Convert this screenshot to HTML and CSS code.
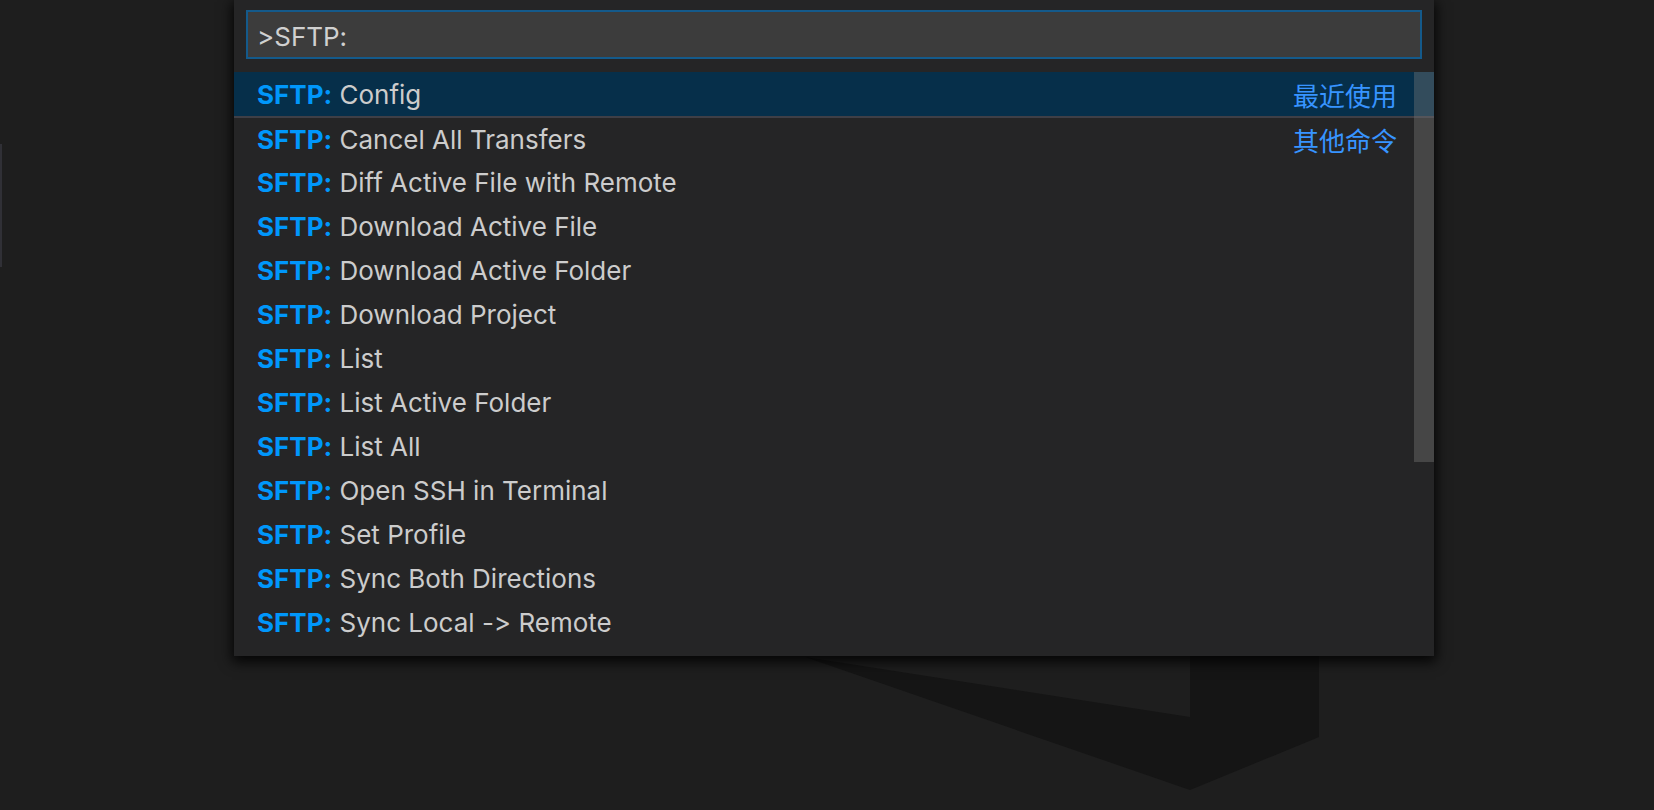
FILE: index.html
```html
<!DOCTYPE html>
<html lang="en">
<head>
<meta charset="utf-8">
<title>Command Palette</title>
<link rel="stylesheet" href="styles.css">
</head>
<body>
<div class="workbench">
  <div class="sash"></div>
  <div class="editor">
    <svg class="watermark" width="1652" height="810" viewBox="0 0 1652 810">
      <polygon points="803,657 1188,717 1188,640 1317,640 1317,737 1188,790" fill="#151515"/>
    </svg>
  </div>
</div>
<div class="quick-input">
  <div class="input-box">&gt;SFTP:</div>
  <div class="list">
    <div class="row selected"><span class="label"><b>SFTP:</b> Config</span><span class="desc">最近使用</span></div>
    <div class="row separator"><span class="label"><b>SFTP:</b> Cancel All Transfers</span><span class="desc">其他命令</span></div>
    <div class="row"><span class="label"><b>SFTP:</b> Diff Active File with Remote</span></div>
    <div class="row"><span class="label"><b>SFTP:</b> Download Active File</span></div>
    <div class="row"><span class="label"><b>SFTP:</b> Download Active Folder</span></div>
    <div class="row"><span class="label"><b>SFTP:</b> Download Project</span></div>
    <div class="row"><span class="label"><b>SFTP:</b> List</span></div>
    <div class="row"><span class="label"><b>SFTP:</b> List Active Folder</span></div>
    <div class="row"><span class="label"><b>SFTP:</b> List All</span></div>
    <div class="row"><span class="label"><b>SFTP:</b> Open SSH in Terminal</span></div>
    <div class="row"><span class="label"><b>SFTP:</b> Set Profile</span></div>
    <div class="row"><span class="label"><b>SFTP:</b> Sync Both Directions</span></div>
    <div class="row"><span class="label"><b>SFTP:</b> Sync Local -&gt; Remote</span></div>
    <div class="thumb"></div>
  </div>
</div>
</body>
</html>
```
FILE: styles.css
```css
* { box-sizing: border-box; }
html, body {
  margin: 0;
  padding: 0;
  width: 1654px;
  height: 810px;
  overflow: hidden;
  background: #1e1e1e;
  font-family: Inter, "Noto Sans CJK SC", sans-serif;
  font-variant-ligatures: none;
  font-feature-settings: "calt" 0, "liga" 0;
}
.workbench {
  display: flex;
  height: 810px;
}
.sash {
  width: 2px;
  height: 123px;
  margin-top: 144px;
  background: #303036;
}
.editor {
  flex: 1;
  height: 810px;
}
.watermark { display: block; }
.quick-input {
  position: absolute;
  left: 234px;
  top: 0;
  width: 1200px;
  height: 656px;
  background: #252526;
  box-shadow: 0 4px 12px 2px rgba(0,0,0,0.85);
  padding: 10px 12px 0;
  overflow: hidden;
}
.input-box {
  height: 49px;
  border: 2px solid #145a8b;
  background: #3c3c3c;
  color: #d0d0d0;
  font-size: 26px;
  line-height: 45px;
  padding: 2px 0 0 9px;
}
.list {
  position: relative;
  margin: 13px -12px 0;
}
.row {
  height: 44px;
  display: flex;
  align-items: center;
  justify-content: space-between;
  padding: 0 37px 0 23px;
  font-size: 26px;
  color: #cccccc;
  white-space: nowrap;
}
.row b {
  color: #0097fb;
  font-weight: 700;
}
.row.selected { background: #062f4a; }
.row.separator { border-top: 2px solid #3f3f46; }
.desc {
  color: #3794ff;
  font-family: "Noto Sans CJK SC", sans-serif;
  font-size: 26px;
}
.thumb {
  position: absolute;
  right: 0;
  top: 0;
  width: 20px;
  height: 390px;
  background: rgba(121,121,121,0.4);
}
```
